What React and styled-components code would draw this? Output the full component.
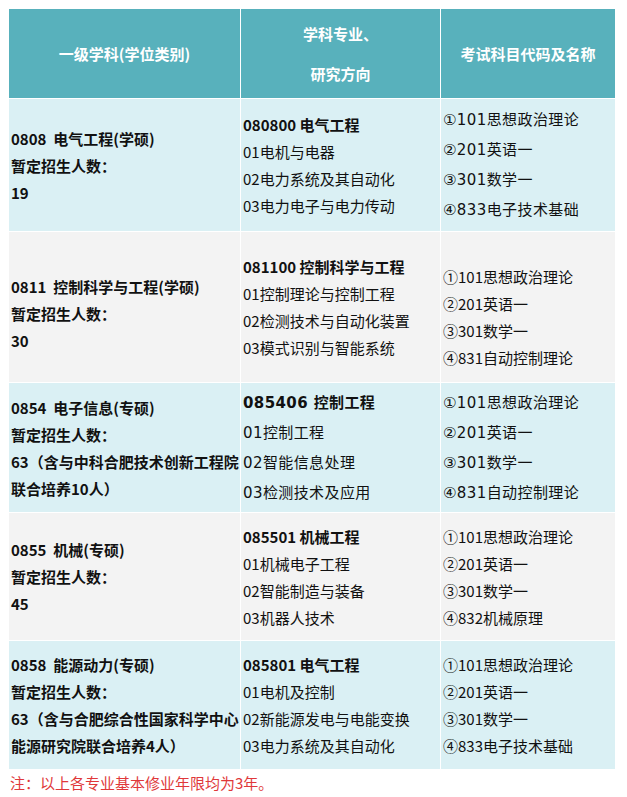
import React from 'react';
import styled, { createGlobalStyle } from 'styled-components';

const rows = [
  {
    height: 133,
    tone: 'cyan',
    subject: ['0808  电气工程(学硕)', '暂定招生人数：', '19'],
    major: { code: '080800 电气工程', list: ['01电机与电器', '02电力系统及其自动化', '03电力电子与电力传动'] },
    exams: ['①101思想政治理论', '②201英语一', '③301数学一', '④833电子技术基础'],
    examWide: true,
    examLh: 30,
  },
  {
    height: 151,
    tone: 'gray',
    subject: ['0811  控制科学与工程(学硕)', '暂定招生人数：', '30'],
    subjectShift: 13,
    major: { code: '081100 控制科学与工程', list: ['01控制理论与控制工程', '02检测技术与自动化装置', '03模式识别与智能系统'] },
    exams: ['①101思想政治理论', '②201英语一', '③301数学一', '④831自动控制理论'],
    examShift: 20,
  },
  {
    height: 130,
    tone: 'cyan',
    subject: ['0854  电子信息(专硕)', '暂定招生人数：', '63（含与中科合肥技术创新工程院', '联合培养10人）'],
    major: { code: '085406 控制工程', list: ['01控制工程', '02智能信息处理', '03检测技术及应用'] },
    majorWide: true,
    majorLh: 30,
    exams: ['①101思想政治理论', '②201英语一', '③301数学一', '④831自动控制理论'],
    examWide: true,
    examLh: 30,
  },
  {
    height: 128,
    tone: 'gray',
    subject: ['0855  机械(专硕)', '暂定招生人数：', '45'],
    major: { code: '085501 机械工程', list: ['01机械电子工程', '02智能制造与装备', '03机器人技术'] },
    exams: ['①101思想政治理论', '②201英语一', '③301数学一', '④832机械原理'],
  },
  {
    height: 129,
    tone: 'cyan',
    subject: ['0858  能源动力(专硕)', '暂定招生人数：', '63（含与合肥综合性国家科学中心', '能源研究院联合培养4人）'],
    major: { code: '085801 电气工程', list: ['01电机及控制', '02新能源发电与电能变换', '03电力系统及其自动化'] },
    exams: ['①101思想政治理论', '②201英语一', '③301数学一', '④833电子技术基础'],
  },
];

const GlobalStyle = createGlobalStyle`
  body {
    margin: 8px;
    background: #ffffff;
    font-family: "Noto Sans CJK SC", "DejaVu Sans", sans-serif;
    font-size: 15px;
    color: #111111;
  }
`;

const Page = styled.div`
  width: 607px;
`;

const Table = styled.table`
  width: 607px;
  border-collapse: collapse;
  table-layout: fixed;
`;

const HeadCell = styled.th`
  background: #58b1bc;
  color: #ffffff;
  font-weight: bold;
  font-size: 15px;
  text-align: center;
  vertical-align: middle;
  border: 1px solid #ffffff;
  padding: 0 2px;
  height: 89px;
  line-height: ${p => p.$lh || 20}px;
`;

const Cell = styled.td`
  background: ${p => (p.$tone === 'cyan' ? '#daf0f4' : '#f3f3f3')};
  border: 1px solid #ffffff;
  vertical-align: middle;
  padding: ${p => p.$shift || 0}px 2px 0 2px;
  font-size: 15px;
  line-height: ${p => p.$lh || 27}px;
  font-family: ${p => (p.$wide ? '"DejaVu Sans", "Noto Sans CJK SC", sans-serif' : '"Noto Sans CJK SC", "DejaVu Sans", sans-serif')};
  letter-spacing: ${p => (p.$wide ? '0.4px' : '0')};
`;

const Line = styled.div`
  white-space: pre;
  font-weight: ${p => (p.$bold ? 'bold' : 'normal')};
  color: #111111;
`;

const Note = styled.div`
  color: #e0383a;
  font-size: 15px;
  padding: 3px 2px 0;
  line-height: 20px;
`;

export default function App() {
  return (
    <Page>
      <GlobalStyle />
      <Table>
        <colgroup>
          <col style={{ width: 232 }} />
          <col style={{ width: 200 }} />
          <col style={{ width: 175 }} />
        </colgroup>
        <thead>
          <tr>
            <HeadCell>一级学科(学位类别)</HeadCell>
            <HeadCell $lh={40}>学科专业、<br />研究方向</HeadCell>
            <HeadCell>考试科目代码及名称</HeadCell>
          </tr>
        </thead>
        <tbody>
          {rows.map(r => (
            <tr key={r.subject[0]} style={{ height: r.height }}>
              <Cell $tone={r.tone} $shift={r.subjectShift}>
                {r.subject.map(t => (
                  <Line key={t} $bold>{t}</Line>
                ))}
              </Cell>
              <Cell $tone={r.tone} $wide={r.majorWide} $lh={r.majorLh}>
                <Line $bold>{r.major.code}</Line>
                {r.major.list.map(t => (
                  <Line key={t}>{t}</Line>
                ))}
              </Cell>
              <Cell $tone={r.tone} $wide={r.examWide} $lh={r.examLh} $shift={r.examShift}>
                {r.exams.map(t => (
                  <Line key={t}>{t}</Line>
                ))}
              </Cell>
            </tr>
          ))}
        </tbody>
      </Table>
      <Note>注：以上各专业基本修业年限均为3年。</Note>
    </Page>
  );
}
